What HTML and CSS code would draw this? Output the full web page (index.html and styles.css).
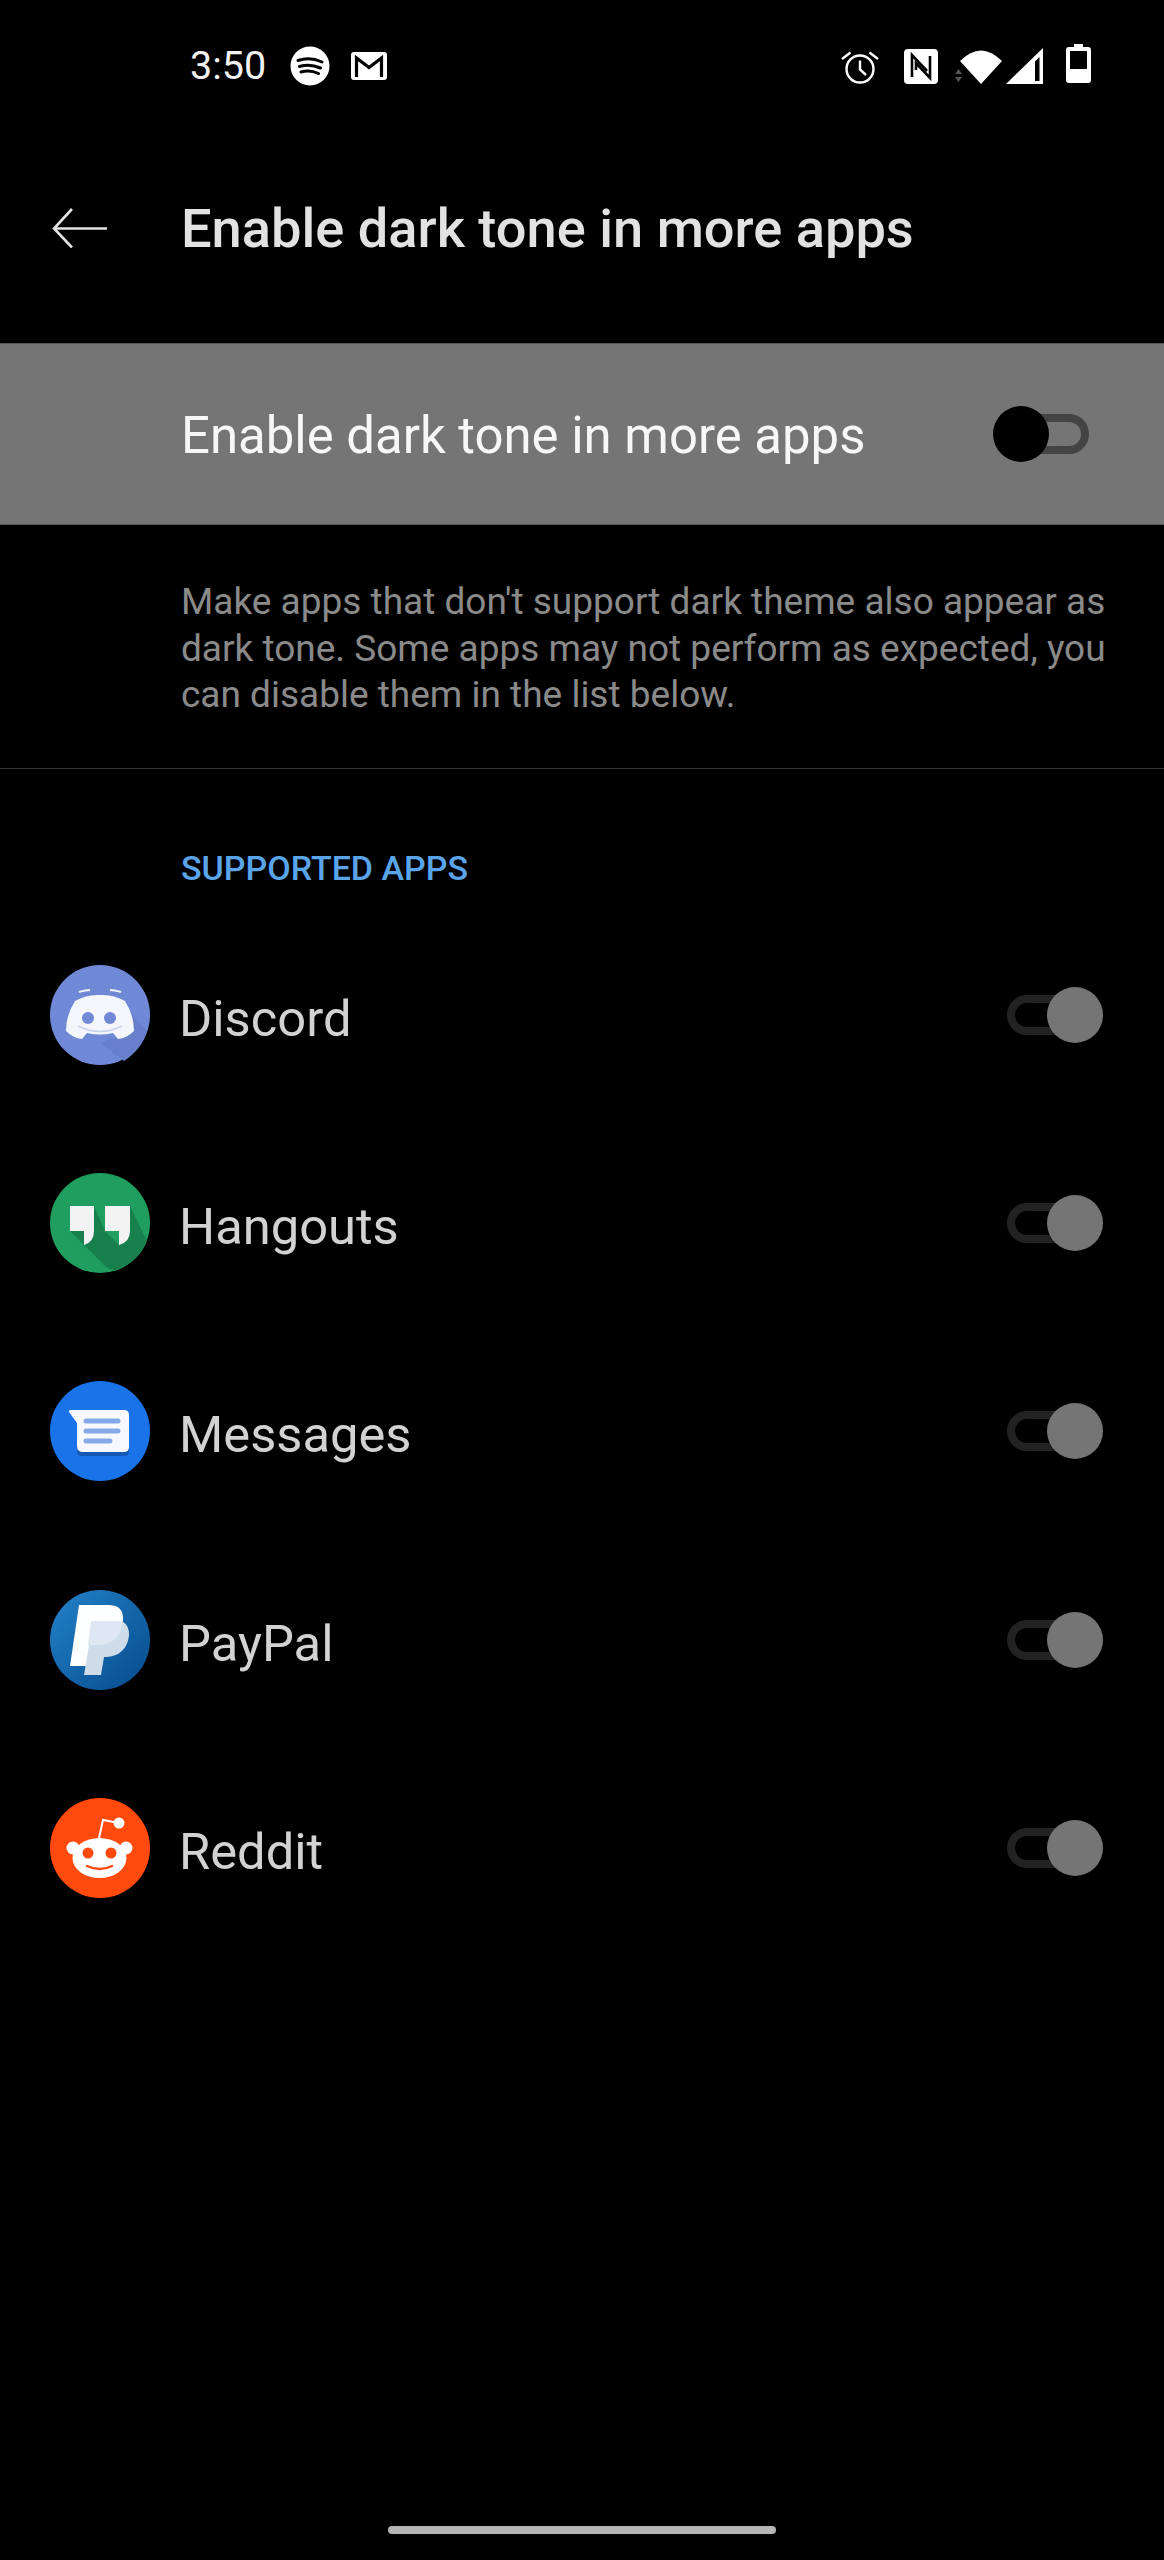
FILE: index.html
```html
<!DOCTYPE html>
<html lang="en">
<head>
<meta charset="UTF-8">
<meta name="viewport" content="width=device-width, initial-scale=1.0">
<title>Enable dark tone in more apps</title>
<link rel="stylesheet" href="styles.css">
</head>
<body>
<div class="phone">

  <div class="status-bar">
    <div class="status-left">
      <span class="time">3:50</span>
      <svg class="ic-spotify" viewBox="0 0 40 40">
        <circle cx="20" cy="20" r="19.5" fill="#fff"/>
        <path d="M8 14.500Q20 10.500 32 16M9.500 20.500Q20 17.500 30.500 22M11 26Q20 23.500 28.500 27.500" fill="none" stroke="#000" stroke-width="3" stroke-linecap="round"/>
      </svg>
      <svg class="ic-gmail" viewBox="0 0 36 28">
        <rect width="36" height="28" rx="3" fill="#fff"/>
        <path d="M5.500 25V6L18 15.500L30.500 6V25" fill="none" stroke="#000" stroke-width="3.200"/>
      </svg>
    </div>
    <div class="status-right">
      <svg class="ic-alarm" viewBox="0 0 38 34">
        <circle cx="19" cy="19" r="13.500" fill="none" stroke="#fff" stroke-width="2.400"/>
        <path d="M19 10.500V19.500L25 25M1 9L9.500 2.500M37 9L28.500 2.500" fill="none" stroke="#fff" stroke-width="2.400"/>
      </svg>
      <svg class="ic-nfc" viewBox="0 0 34 35">
        <rect width="34" height="35" rx="4" fill="#fff"/>
        <path d="M8 28V6L23 22" fill="none" stroke="#000" stroke-width="2.600"/>
        <path d="M26 7V29L12 14V21" fill="none" stroke="#000" stroke-width="2.600"/>
      </svg>
      <svg class="ic-wifi" viewBox="0 0 48 36">
        <path d="M5 13Q26 -8 47 13L26 36Z" fill="#fff"/>
        <path d="M0 26L3.500 21L7 26ZM0 29H7L3.500 34Z" fill="#555"/>
      </svg>
      <svg class="ic-signal" viewBox="0 0 37 36">
        <path d="M0 36L37 0V36ZM29 33H33.500V9L29 13.500Z" fill="#fff" fill-rule="evenodd"/>
      </svg>
      <svg class="ic-battery" viewBox="0 0 25 39">
        <path d="M8 0H17V3H22Q25 3 25 6V36Q25 39 22 39H3Q0 39 0 36V6Q0 3 3 3H8Z" fill="#fff"/>
        <rect x="4" y="7" width="17" height="18" fill="#000"/>
      </svg>
    </div>
  </div>

  <div class="app-header">
    <svg class="back-arrow" viewBox="0 0 56 40">
      <path d="M55 20.500H3M20 1L2 20.500L20 39.500" fill="none" stroke="#e2e2e2" stroke-width="2.600"/>
    </svg>
    <h1 class="page-title">Enable dark tone in more apps</h1>
  </div>

  <div class="master-row">
    <span class="master-label">Enable dark tone in more apps</span>
    <div class="switch switch-master"><div class="knob"></div></div>
  </div>

  <p class="description">Make apps that don't support dark theme also appear as dark tone. Some apps may not perform as expected, you can disable them in the list below.</p>

  <div class="section-title">SUPPORTED APPS</div>

  <div class="app-list">
    <div class="app-row">
      <svg class="app-icon" viewBox="0 0 100 100">
        <circle cx="50" cy="50" r="50" fill="#7089d6"/>
        <path d="M72 70L50 78L74 96Q92 84 97 66L82 50Z" fill="#6880cc"/>
        <path d="M25 36Q37 29 50 30Q63 29 75 36Q84 50 84 66Q77 73 68 74L63 68Q50 71 37 68L32 74Q23 73 16 66Q16 50 25 36Z" fill="#f4f6fb"/>
        <path d="M29 27Q36 25 40 25M71 27Q64 25 60 25" fill="none" stroke="#f4f6fb" stroke-width="2"/>
        <path d="M28 61Q50 72 72 61" fill="none" stroke="#c9d3ee" stroke-width="1.500"/>
        <circle cx="38" cy="53" r="6" fill="#7089d6"/>
        <circle cx="60" cy="53" r="6" fill="#7089d6"/>
      </svg>
      <span class="app-name">Discord</span>
      <div class="switch"><div class="knob"></div></div>
    </div>
    <div class="app-row">
      <svg class="app-icon" viewBox="0 0 100 100">
        <circle cx="50" cy="50" r="50" fill="#1f9e5f"/>
        <path d="M20 58L34 72L50 88Q60 100 70 96Q90 86 97 68L80 33L69 72L55 58L44 33L34 58Z" fill="#17804c"/>
        <path d="M20 33H44V58Q44 69 34 72V58H20ZM55 33H80V58Q80 69 69 72V58H55Z" fill="#f3f3f3"/>
      </svg>
      <span class="app-name">Hangouts</span>
      <div class="switch"><div class="knob"></div></div>
    </div>
    <div class="app-row">
      <svg class="app-icon" viewBox="0 0 100 100">
        <circle cx="50" cy="50" r="50" fill="#1a73e8"/>
        <path d="M27 44V70Q27 75 32 75H74Q79 75 79 70V44Z" fill="#1559b4"/>
        <path d="M21 29H74Q79 29 79 34V66Q79 71 74 71H33Q27 71 27 65V42L19 31Q18 29 21 29Z" fill="#f7f9fe"/>
        <path d="M36 40H68M36 50H68M36 60H60" fill="none" stroke="#86a9e8" stroke-width="5" stroke-linecap="round"/>
      </svg>
      <span class="app-name">Messages</span>
      <div class="switch"><div class="knob"></div></div>
    </div>
    <div class="app-row">
      <svg class="app-icon" viewBox="0 0 100 100">
        <defs>
          <linearGradient id="paypalBg" x1="0" y1="0" x2="1" y2="1">
            <stop offset="0" stop-color="#2382c8"/>
            <stop offset="1" stop-color="#064a8c"/>
          </linearGradient>
        </defs>
        <circle cx="50" cy="50" r="50" fill="url(#paypalBg)"/>
        <path d="M29 15H58Q74 15 73 30Q71 52 50 55H41L36 76H20Z" fill="#fdfeff"/>
        <path d="M43 31H72Q80 36 79 46Q76 66 56 67H54L51 85H34L43 31Z" fill="#cfdcea"/>
        <path d="M41 31H72Q73 52 50 55H38Z" fill="#dfe8f2"/>
      </svg>
      <span class="app-name">PayPal</span>
      <div class="switch"><div class="knob"></div></div>
    </div>
    <div class="app-row">
      <svg class="app-icon" viewBox="0 0 100 100">
        <circle cx="50" cy="50" r="50" fill="#fe4a0c"/>
        <path d="M49 40L53 22L69 25" fill="none" stroke="#fff" stroke-width="2"/>
        <circle cx="69" cy="25" r="5.500" fill="#fff"/>
        <circle cx="23" cy="50" r="6.500" fill="#fff"/>
        <circle cx="76" cy="50" r="6.500" fill="#fff"/>
        <ellipse cx="49.500" cy="60" rx="27" ry="20" fill="#fff"/>
        <circle cx="38" cy="55" r="5.500" fill="#fe4a0c"/>
        <circle cx="61" cy="55" r="5.500" fill="#fe4a0c"/>
        <path d="M37 68Q49.500 74 62 68" fill="none" stroke="#fe4a0c" stroke-width="2.400" stroke-linecap="round"/>
      </svg>
      <span class="app-name">Reddit</span>
      <div class="switch"><div class="knob"></div></div>
    </div>
  </div>

  <div class="home-bar"></div>
</div>
</body>
</html>
```

FILE: styles.css
```css
html, body {
  margin: 0;
  padding: 0;
  background-color: #000;
}
body {
  font-family: Roboto, sans-serif;
}
.phone {
  width: 1164px;
  height: 2560px;
  display: flex;
  flex-direction: column;
  overflow: hidden;
}

/* status bar */
.status-bar {
  height: 130px;
  padding: 2px 73px 0 190px;
  display: flex;
  align-items: center;
  justify-content: space-between;
  box-sizing: border-box;
}
.status-left, .status-right {
  display: flex;
  align-items: center;
}
.time {
  color: #f2f2f2;
  font-size: 39.500px;
  line-height: 1;
  width: 100px;
}
.ic-spotify { width: 40px; height: 40px; margin-right: 21px; }
.ic-gmail { width: 36px; height: 28px; }
.ic-alarm { width: 38px; height: 34px; margin-right: 25px; margin-top: 1px; }
.ic-nfc { width: 34px; height: 35px; margin-right: 17px; }
.ic-wifi { width: 48px; height: 36px; margin-right: 3px; }
.ic-signal { width: 37px; height: 36px; margin-right: 23px; }
.ic-battery { width: 25px; height: 39px; margin-bottom: 5px; }

/* header */
.app-header {
  height: 213px;
  padding-bottom: 17px;
  box-sizing: border-box;
  display: flex;
  align-items: center;
}
.back-arrow {
  width: 56px;
  height: 40px;
  margin-left: 52px;
  margin-right: 73px;
}
.page-title {
  margin: 0;
  font-size: 54.200px;
  font-weight: 500;
  color: #e2e2e2;
}

/* big toggle row */
.master-row {
  height: 182px;
  box-sizing: border-box;
  background-color: #757575;
  border-top: 1px solid #555;
  border-bottom: 1px solid #555;
  display: flex;
  align-items: center;
  justify-content: space-between;
  padding: 0 75px 0 181px;
}
.master-label {
  margin-top: 3px;
  font-size: 50.900px;
  color: #f7f7f7;
}

/* switches */
.switch {
  position: relative;
  width: 82px;
  height: 40px;
  box-sizing: border-box;
  border: 8px solid #222;
  border-radius: 20px;
  flex-shrink: 0;
}
.knob {
  position: absolute;
  top: -16px;
  right: -22px;
  width: 56px;
  height: 56px;
  border-radius: 50%;
  background-color: #757575;
}
.switch-master {
  border-color: #444;
}
.switch-master .knob {
  right: auto;
  left: -22px;
  background-color: #000;
}

.description {
  margin: 0;
  padding: 54px 40px 49px 181px;
  font-size: 37px;
  line-height: 46.500px;
  color: #8a8a8a;
  border-bottom: 1px solid #333;
}
.section-title {
  padding: 80px 0 0 181px;
  height: 62px;
  font-size: 34px;
  font-weight: 500;
  line-height: 38px;
  color: #5aa5ea;
}

/* apps */
.app-row {
  height: 208.400px;
  display: flex;
  align-items: center;
  padding: 0 75px 0 50px;
}
.app-icon {
  width: 100px;
  height: 100px;
  flex-shrink: 0;
}
.app-name {
  flex: 1;
  margin-left: 29px;
  margin-top: 7px;
  font-size: 50.700px;
  color: #d2d2d2;
}

.home-bar {
  width: 388px;
  height: 8px;
  border-radius: 4px;
  background-color: #b5b5b5;
  position: absolute;
  left: 388px;
  top: 2526px;
}
```
